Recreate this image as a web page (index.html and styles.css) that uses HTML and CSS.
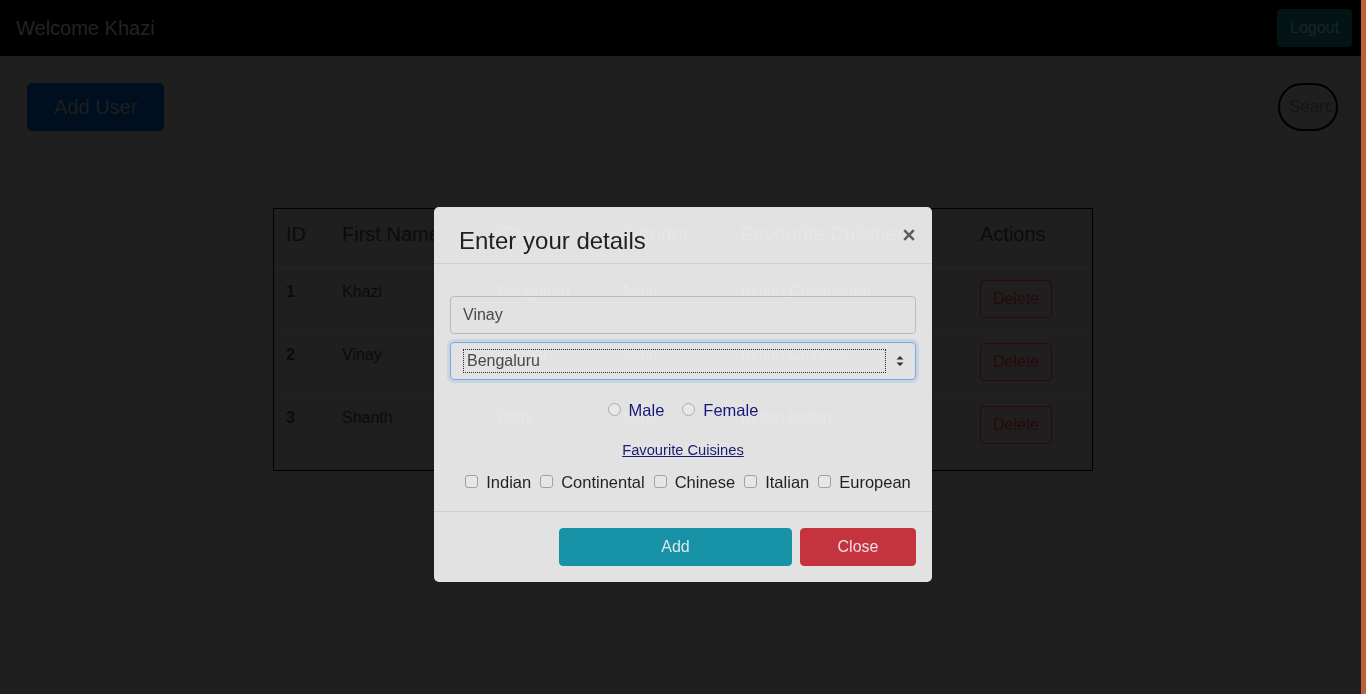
FILE: index.html
```html
<!DOCTYPE html>
<html lang="en">
<head>
<meta charset="utf-8">
<title>Users</title>
<link rel="stylesheet" href="styles.css">
</head>
<body>
<nav class="navbar">
  <span class="brand">Welcome Khazi</span>
  <button class="btn btn-logout" type="button">Logout</button>
</nav>

<main class="page">
  <div class="toolbar">
    <button class="btn btn-add-user" type="button">Add User</button>
    <input class="search" type="text" placeholder="Search">
  </div>

  <div class="table-box">
    <table class="users">
      <colgroup>
        <col class="c-id"><col class="c-first"><col class="c-city"><col class="c-gender"><col class="c-cuisine"><col class="c-actions">
      </colgroup>
      <thead>
        <tr>
          <th>ID</th>
          <th>First Name</th>
          <th class="under">City</th>
          <th class="under">Gender</th>
          <th class="under">Favourite Cuisines</th>
          <th>Actions</th>
        </tr>
      </thead>
      <tbody>
        <tr>
          <td class="id">1</td>
          <td>Khazi</td>
          <td class="under">Bengaluru</td>
          <td class="under">Male</td>
          <td class="under">Indian,Continental</td>
          <td><button class="btn btn-delete" type="button">Delete</button></td>
        </tr>
        <tr>
          <td class="id">2</td>
          <td>Vinay</td>
          <td class="under">Bhopal</td>
          <td class="under">Male</td>
          <td class="under">Indian,Chinese</td>
          <td><button class="btn btn-delete" type="button">Delete</button></td>
        </tr>
        <tr>
          <td class="id">3</td>
          <td>Shanth</td>
          <td class="under">Delhi</td>
          <td class="under">Male</td>
          <td class="under">Indian,Italian</td>
          <td><button class="btn btn-delete" type="button">Delete</button></td>
        </tr>
      </tbody>
    </table>
  </div>
</main>

<div class="modal-layer">
  <div class="modal-dialog">
    <div class="modal-content">
      <div class="modal-header">
        <h5 class="modal-title">Enter your details</h5>
        <button class="close" type="button" aria-label="Close">
          <svg width="12" height="12" viewBox="0 0 12 12"><path d="M1.2 1.2 L10.8 10.8 M10.8 1.2 L1.2 10.8" stroke="#5e5f61" stroke-width="2.6" stroke-linecap="butt" fill="none"/></svg>
        </button>
      </div>
      <div class="modal-body">
        <input class="field" type="text" value="Vinay">
        <div class="select-wrap">
          <select class="field select"><option>Bengaluru</option><option>Bhopal</option><option>Delhi</option></select>
          <span class="focus-ring"></span>
          <svg class="caret" width="8" height="12" viewBox="0 0 8 12"><path d="M0.5 4.5 L4 1 L7.5 4.5 Z M0.5 7.5 L4 11 L7.5 7.5 Z" fill="#2e3033"/></svg>
        </div>
        <div class="radio-row">
          <label class="choice radio-label"><input class="radio" type="radio" name="gender">Male</label>
          <label class="choice radio-label"><input class="radio" type="radio" name="gender">Female</label>
        </div>
        <div class="link-row"><a class="cuisine-link" href="#">Favourite Cuisines</a></div>
        <div class="check-row">
          <label class="choice"><input class="check" type="checkbox">Indian</label>
          <label class="choice"><input class="check" type="checkbox">Continental</label>
          <label class="choice"><input class="check" type="checkbox">Chinese</label>
          <label class="choice"><input class="check" type="checkbox">Italian</label>
          <label class="choice"><input class="check" type="checkbox">European</label>
        </div>
      </div>
      <div class="modal-footer">
        <button class="btn btn-confirm" type="button">Add</button>
        <button class="btn btn-close" type="button">Close</button>
      </div>
    </div>
  </div>
</div>

<div class="edge"></div>
</body>
</html>
```

FILE: styles.css
```css
* { box-sizing: border-box; }

html, body {
  margin: 0;
  height: 100%;
}

body {
  background: #1f1f1f;
  font-family: "Liberation Sans", Arial, sans-serif;
  overflow: hidden;
}

.btn {
  font-family: "Liberation Sans", Arial, sans-serif;
  font-size: 16px;
  line-height: 24px;
  padding: 6px 12px;
  border: 1px solid transparent;
  border-radius: 4px;
  cursor: pointer;
}

/* navbar */
.navbar {
  height: 56px;
  background: #000;
  display: flex;
  align-items: center;
  justify-content: space-between;
  padding: 0 14px 0 16px;
}

.brand {
  color: #232323;
  font-size: 20px;
  line-height: 30px;
}

.btn-logout {
  background: #021416;
  border-color: #021416;
  color: #1b2425;
}

/* toolbar */
.toolbar {
  display: flex;
  justify-content: space-between;
  align-items: flex-start;
  padding: 27px 28px 0 27px;
}

.btn-add-user {
  font-size: 20px;
  line-height: 30px;
  padding: 8px 26px;
  background: #000f1f;
  border-color: #000f1f;
  color: #1e1e1e;
  border-radius: 5px;
}

.search {
  width: 60px;
  height: 48px;
  border: 2px solid #000;
  border-radius: 24px;
  background: transparent;
  font-family: "Liberation Sans", Arial, sans-serif;
  font-size: 17px;
  padding: 0 4px 0 9px;
  color: #151515;
}

.search::placeholder {
  color: #141414;
  opacity: 1;
}

/* table */
.table-box {
  width: 820px;
  margin: 77px auto 0;
  border: 1px solid #000;
  padding-bottom: 14px;
}

.users {
  width: 100%;
  border-collapse: collapse;
  table-layout: fixed;
  color: #0b0b0b;
}

.c-id { width: 56px; }
.c-first { width: 155px; }
.c-city { width: 126px; }
.c-gender { width: 118px; }
.c-cuisine { width: 239px; }
.c-actions { width: 124px; }

.users th {
  font-size: 20px;
  line-height: 30px;
  font-weight: normal;
  text-align: left;
  padding: 10px 12px 18px;
  border-bottom: 1px solid #242424;
  white-space: nowrap;
}

.users td {
  font-size: 16px;
  line-height: 24px;
  padding: 12px;
  vertical-align: top;
  white-space: nowrap;
}

.users tbody tr + tr td {
  border-top: 1px solid #232323;
}

.users td.id {
  font-weight: bold;
}

.users .under {
  color: #ffffff;
}

.btn-delete {
  background: transparent;
  border-color: #2a090d;
  color: #28090c;
}

/* modal */
.modal-layer {
  position: fixed;
  inset: 0;
  display: flex;
  justify-content: center;
  align-items: flex-start;
  padding-top: 207px;
  z-index: 10;
}

.modal-dialog {
  width: 498px;
}

.modal-content {
  background: rgba(230, 230, 230, 0.985);
  border-radius: 5px;
}

.modal-header {
  display: flex;
  justify-content: space-between;
  align-items: flex-start;
  padding: 16px 17px 4px 25px;
  border-bottom: 1px solid #cfcfcf;
}

.modal-title {
  margin: 0;
  font-size: 24px;
  line-height: 36px;
  font-weight: normal;
  color: #1d2024;
}

.close {
  margin-top: 6px;
  padding: 0;
  border: 0;
  background: transparent;
  width: 12px;
  height: 12px;
  display: flex;
  cursor: pointer;
}

.modal-body {
  padding: 32px 16px 19px;
}

.field {
  display: block;
  width: 100%;
  height: 38px;
  padding: 6px 12px;
  font-family: "Liberation Sans", Arial, sans-serif;
  font-size: 16px;
  line-height: 24px;
  color: #45494d;
  background: transparent;
  border: 1px solid #b7bbc0;
  border-radius: 4px;
}

.select-wrap {
  position: relative;
  margin-top: 8px;
}

.select {
  appearance: none;
  -webkit-appearance: none;
  padding-left: 16px;
  border-color: #75a9e2;
  box-shadow: 0 0 0 3px rgba(90, 150, 225, 0.16);
  outline: none;
}

.focus-ring {
  position: absolute;
  left: 13px;
  top: 7px;
  right: 30px;
  bottom: 7px;
  border: 1px dotted #2a2a2a;
  pointer-events: none;
}

.caret {
  position: absolute;
  right: 12px;
  top: 13px;
  pointer-events: none;
}

.choice {
  display: flex;
  align-items: center;
  gap: 8px;
  font-size: 16.5px;
  line-height: 20px;
  color: #1e2125;
  white-space: nowrap;
}

.radio-row {
  display: flex;
  justify-content: center;
  gap: 18px;
  margin-top: 18px;
  height: 24px;
  align-items: center;
}

.radio-label {
  color: #18187c;
  line-height: 24px;
}

.radio {
  appearance: none;
  -webkit-appearance: none;
  width: 13px;
  height: 13px;
  margin: -2px 0 0 0;
  border: 1px solid #aaaaaa;
  border-radius: 50%;
  background: #e8e8e8;
}

.link-row {
  margin-top: 18px;
  height: 20px;
  text-align: center;
  font-size: 14.7px;
  line-height: 20px;
}

.cuisine-link {
  color: #1b1b70;
  text-decoration: underline;
}

.check-row {
  display: flex;
  justify-content: center;
  gap: 9px;
  margin-top: 12px;
  height: 20px;
  padding-left: 10px;
}

.check {
  appearance: none;
  -webkit-appearance: none;
  width: 13px;
  height: 13px;
  margin: -1px 0 0 0;
  border: 1px solid #a2a2a2;
  border-radius: 3px;
  background: #e6e6e6;
}

.modal-footer {
  display: flex;
  justify-content: flex-end;
  gap: 8px;
  padding: 16px;
  border-top: 1px solid #cfcfcf;
}

.btn-confirm {
  width: 233px;
  background: #1892a6;
  border-color: #1892a6;
  color: #dbe8ea;
}

.btn-close {
  width: 116px;
  background: #c5333f;
  border-color: #c5333f;
  color: #eadfe0;
}

/* right edge strip */
.edge {
  position: fixed;
  top: 0;
  right: 0;
  bottom: 0;
  width: 5px;
  background: #bd613b;
  z-index: 20;
}
```
